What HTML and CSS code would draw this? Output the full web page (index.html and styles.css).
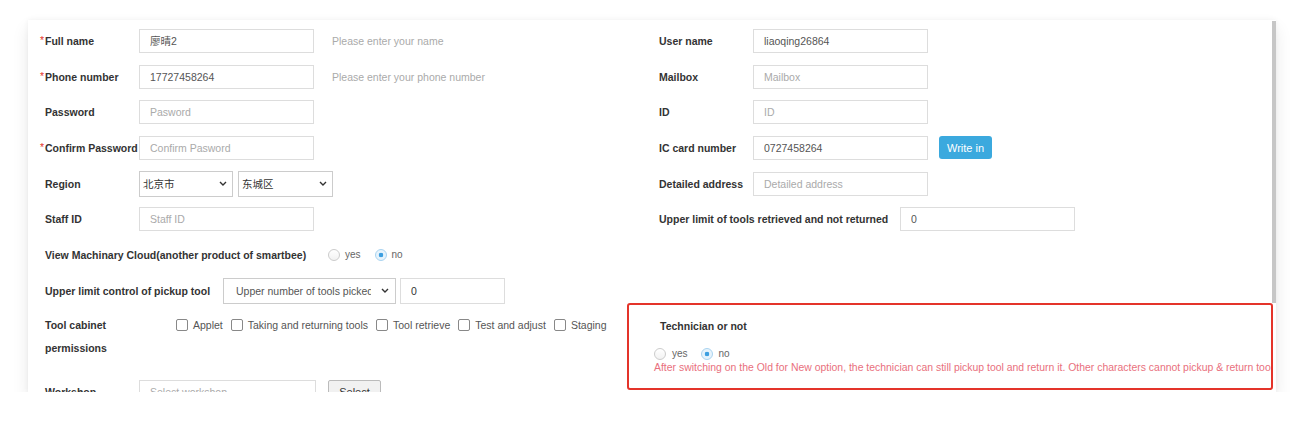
FILE: index.html
```html
<!DOCTYPE html>
<html lang="en">
<head>
    <meta charset="UTF-8">
    <title>User details</title>
    <link rel="stylesheet" href="styles.css">
</head>
<body>
    <div class="card">
        <div class="col col-left">
            <div class="row">
                <label class="label required">Full name</label>
                <input class="input" value="廖晴2">
                <span class="hint">Please enter your name</span>
            </div>
            <div class="row">
                <label class="label required">Phone number</label>
                <input class="input" value="17727458264">
                <span class="hint">Please enter your phone number</span>
            </div>
            <div class="row">
                <label class="label">Password</label>
                <input class="input" placeholder="Pasword">
            </div>
            <div class="row">
                <label class="label required">Confirm Password</label>
                <input class="input" placeholder="Confirm Pasword">
            </div>
            <div class="row">
                <label class="label">Region</label>
                <div class="select region-city">
                    <span>北京市</span>
                    <svg width="8" height="5" viewBox="0 0 8 5"><path d="M1 1l3 3 3-3" fill="none" stroke="#333" stroke-width="1.4"/></svg>
                </div>
                <div class="select region-district">
                    <span>东城区</span>
                    <svg width="8" height="5" viewBox="0 0 8 5"><path d="M1 1l3 3 3-3" fill="none" stroke="#333" stroke-width="1.4"/></svg>
                </div>
            </div>
            <div class="row">
                <label class="label">Staff ID</label>
                <input class="input" placeholder="Staff ID">
            </div>
            <div class="row">
                <label class="label label-cloud">View Machinary Cloud(another product of smartbee)</label>
                <span class="radio"><span class="dot"></span>yes</span>
                <span class="radio"><span class="dot on"></span>no</span>
            </div>
            <div class="row">
                <label class="label label-pickup">Upper limit control of pickup tool</label>
                <div class="select pickup-select">
                    <span>Upper number of tools picked up</span>
                    <svg width="8" height="5" viewBox="0 0 8 5"><path d="M1 1l3 3 3-3" fill="none" stroke="#333" stroke-width="1.4"/></svg>
                </div>
                <input class="input input-small" value="0">
            </div>
            <div class="row row-perms">
                <label class="label label-wrap">Tool cabinet permissions</label>
                <div class="checks">
                    <span class="check"><span class="box"></span>Applet</span>
                    <span class="check"><span class="box"></span>Taking and returning tools</span>
                    <span class="check"><span class="box"></span>Tool retrieve</span>
                    <span class="check"><span class="box"></span>Test and adjust</span>
                    <span class="check"><span class="box"></span>Staging</span>
                </div>
            </div>
            <div class="row">
                <label class="label">Workshop</label>
                <input class="input input-workshop" placeholder="Select workshop">
                <button class="btn-plain">Select</button>
            </div>
        </div>

        <div class="col col-right">
            <div class="row">
                <label class="label">User name</label>
                <input class="input" value="liaoqing26864">
            </div>
            <div class="row">
                <label class="label">Mailbox</label>
                <input class="input" placeholder="Mailbox">
            </div>
            <div class="row">
                <label class="label">ID</label>
                <input class="input" placeholder="ID">
            </div>
            <div class="row">
                <label class="label">IC card number</label>
                <input class="input" value="0727458264">
                <button class="btn-blue">Write in</button>
            </div>
            <div class="row">
                <label class="label">Detailed address</label>
                <input class="input" placeholder="Detailed address">
            </div>
            <div class="row">
                <label class="label label-retrieved">Upper limit of tools retrieved and not returned</label>
                <input class="input" value="0">
            </div>

            <div class="tech">
                <div class="tech-title">Technician or not</div>
                <div class="tech-radios">
                    <span class="radio"><span class="dot"></span>yes</span>
                    <span class="radio"><span class="dot on"></span>no</span>
                </div>
                <div class="tech-note">After switching on the Old for New option, the technician can still pickup tool and return it. Other characters cannot pickup &amp; return tools.</div>
            </div>
        </div>

        <div class="scrollbar"></div>
    </div>
</body>
</html>
```

FILE: styles.css
```css
body {
    margin: 0;
    background: #fff;
    font-family: "Liberation Sans", Arial, "Noto Sans CJK SC", sans-serif;
    font-size: 10.5px;
    color: #333;
}

.card {
    position: relative;
    display: flex;
    width: 1248px;
    height: 372px;
    margin: 20px 0 0 28px;
    padding: 3px 0 0 12px;
    box-sizing: border-box;
    background: #fff;
    box-shadow: 0 8px 16px rgba(0, 0, 0, 0.09), 0 0 5px rgba(0, 0, 0, 0.05);
    overflow: hidden;
}

.col-left {
    width: 614px;
    flex: none;
}

.col-right {
    flex: 1;
    min-width: 0;
}

.row {
    display: flex;
    align-items: center;
    height: 35.7px;
}

.label {
    width: 99px;
    flex: none;
    box-sizing: border-box;
    padding-left: 5px;
    font-weight: bold;
    white-space: nowrap;
}

.label.required {
    padding-left: 0;
}

.label.required::before {
    content: "*";
    display: inline-block;
    width: 5px;
    color: #e4322b;
    font-weight: normal;
    vertical-align: 1px;
}

.label-cloud {
    width: 288px;
}

.label-pickup {
    width: 183px;
}

.label-retrieved {
    width: 246px;
}

.input {
    width: 175px;
    height: 24px;
    box-sizing: border-box;
    border: 1px solid #ddd;
    padding: 0 10px;
    font-family: inherit;
    font-size: 10.5px;
    color: #555;
    background: #fff;
    outline: none;
}

.input::placeholder {
    color: #aaa;
}

.hint {
    margin-left: 18px;
    color: #aaa;
}

.select {
    display: flex;
    align-items: center;
    height: 26px;
    box-sizing: border-box;
    border: 1px solid #ccc;
    padding: 0 5px 0 3px;
    color: #333;
    background: #fff;
}

.select span {
    flex: 1;
    overflow: hidden;
    white-space: nowrap;
}

.select svg {
    flex: none;
    margin-left: 4px;
}

.region-city {
    width: 94px;
}

.region-district {
    width: 95px;
    margin-left: 5px;
}

.pickup-select {
    width: 173px;
    padding: 0 6px 0 12px;
    color: #555;
}

.pickup-select svg {
    margin-left: 10px;
}

.input-small {
    width: 105px;
    height: 26px;
    margin-left: 4px;
    color: #333;
}

.radio {
    display: inline-flex;
    align-items: center;
    margin-right: 14px;
    color: #666;
    font-size: 10px;
}

.dot {
    width: 12px;
    height: 12px;
    box-sizing: border-box;
    margin-right: 5px;
    border: 1px solid #ccc;
    border-radius: 50%;
    background: linear-gradient(#fff, #f2f2f2);
}

.dot.on {
    border-color: #a9d3f0;
    background: radial-gradient(circle, #3d9fe0 0, #3d9fe0 2px, #e6f3fc 2.6px);
}

.row-perms {
    height: auto;
    align-items: flex-start;
    padding-top: 5px;
    margin-bottom: 14.5px;
}

.label-wrap {
    white-space: normal;
    line-height: 23px;
}

.checks {
    display: flex;
    align-items: center;
    height: 23px;
    margin-left: 37px;
    color: #555;
}

.check {
    display: inline-flex;
    align-items: center;
    margin-right: 8px;
}

.box {
    width: 12px;
    height: 12px;
    box-sizing: border-box;
    margin-right: 5px;
    border: 1px solid #888;
    border-radius: 2px;
    background: #fff;
}

.input-workshop {
    width: 177px;
}

.btn-plain {
    width: 53px;
    height: 24px;
    margin-left: 12px;
    border: 1px solid #bbb;
    border-radius: 2px;
    background: #f1f1f1;
    font-family: inherit;
    font-size: 11px;
    color: #333;
}

.btn-blue {
    width: 53px;
    height: 23px;
    margin-left: 11px;
    border: none;
    border-radius: 3px;
    background: #3ba9de;
    font-family: inherit;
    font-size: 11px;
    color: #fff;
}

.tech {
    width: 646px;
    height: 87px;
    box-sizing: border-box;
    margin: 65.6px 0 0 -27px;
    padding: 14px 0 0 25px;
    border: 2px solid #e4342a;
    border-radius: 3px;
    overflow: hidden;
    position: relative;
    z-index: 1;
    background: #fff;
}

.tech-title {
    padding-left: 6px;
    line-height: 14px;
    font-weight: bold;
}

.tech-radios {
    display: flex;
    align-items: center;
    height: 14px;
    margin-top: 14px;
}

.tech-radios .radio {
    margin-right: 13px;
}

.tech-radios .dot {
    margin-right: 6px;
}

.tech-note {
    line-height: 14px;
    font-size: 10.45px;
    color: #e9707d;
    white-space: nowrap;
}

.scrollbar {
    position: absolute;
    top: 1px;
    right: 0;
    width: 4px;
    height: 282px;
    background: #c6c6c6;
}
```
